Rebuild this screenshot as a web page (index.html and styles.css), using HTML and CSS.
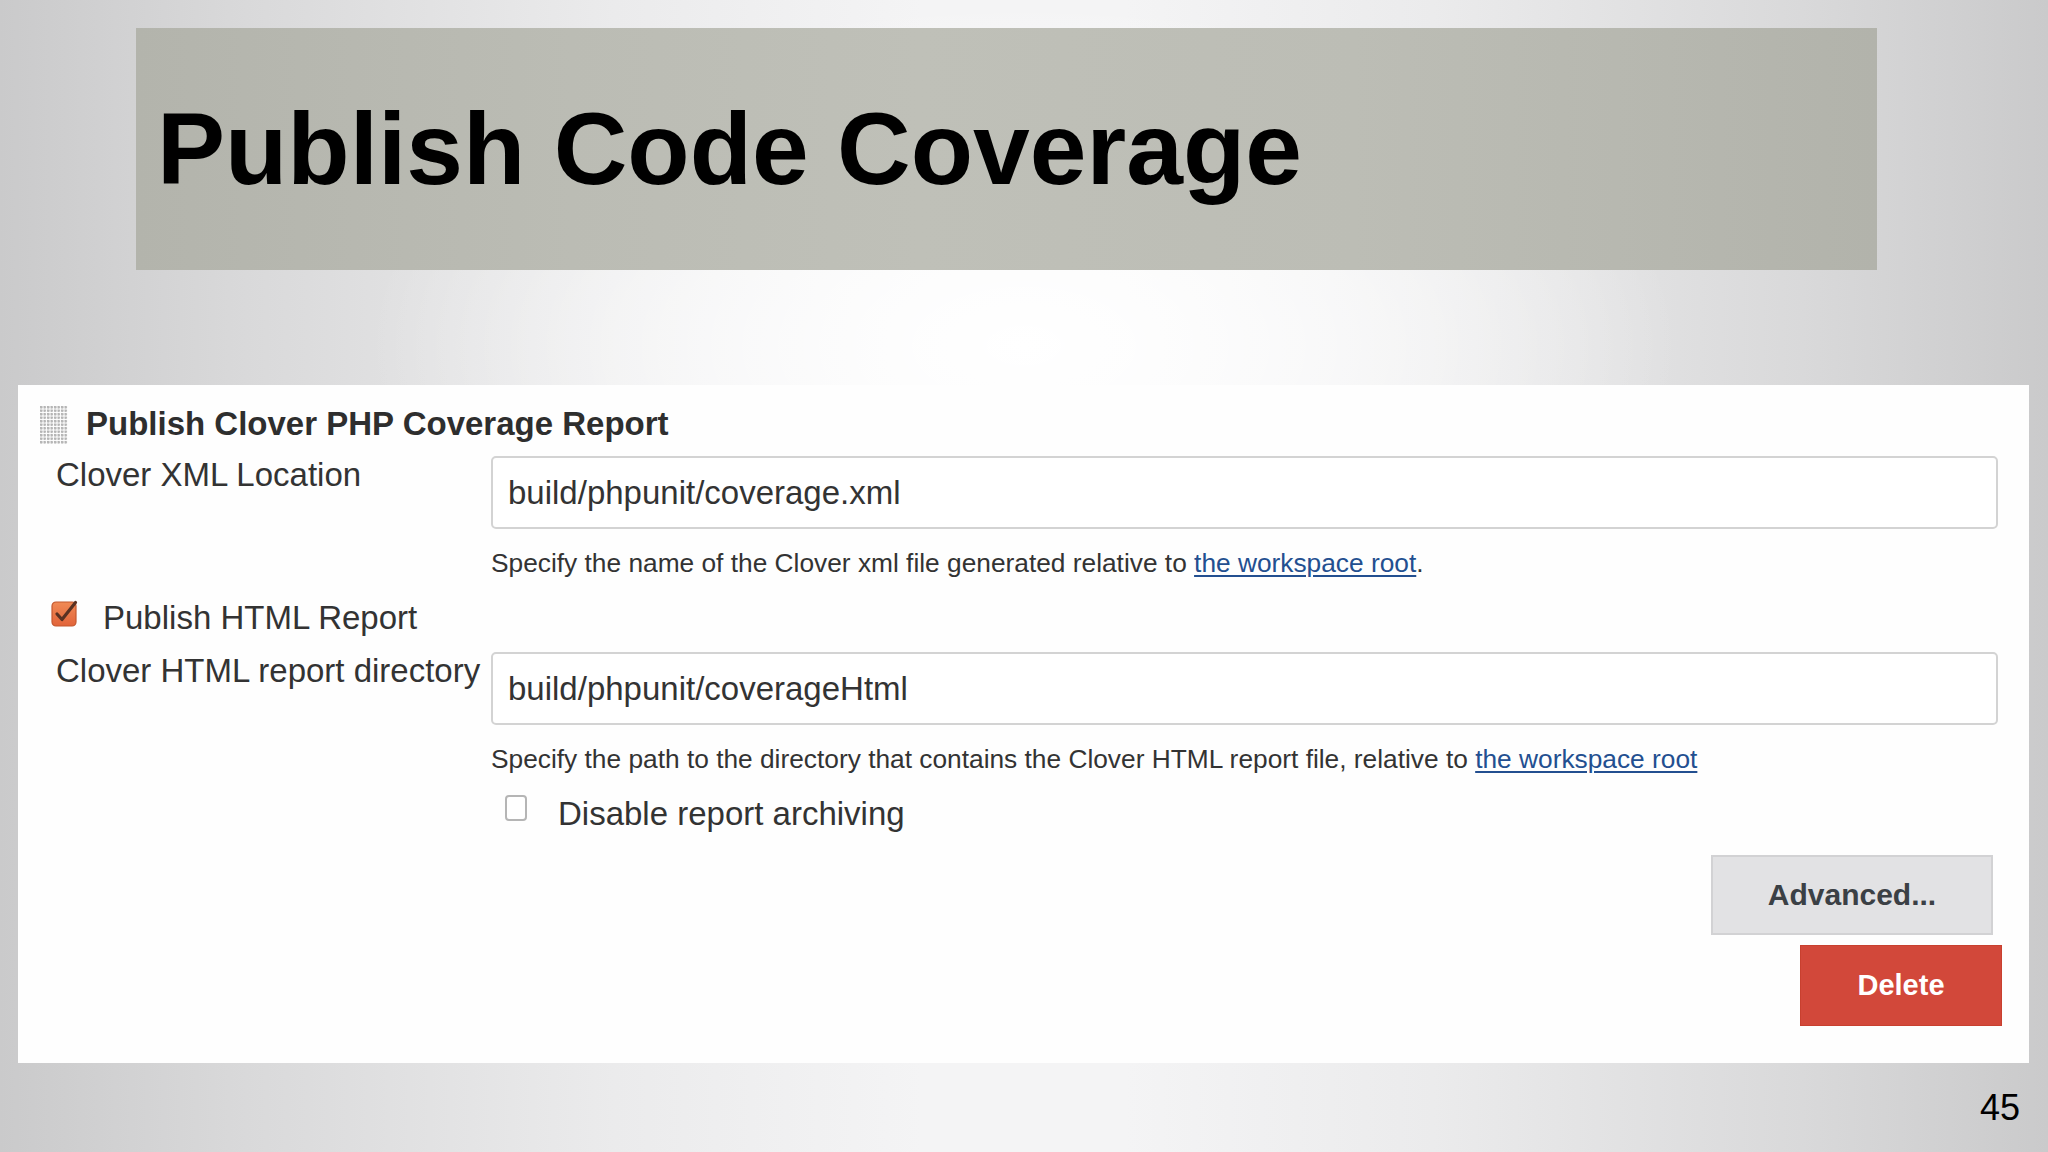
FILE: index.html
```html
<!DOCTYPE html>
<html lang="en">
<head>
<meta charset="utf-8">
<title>Publish Code Coverage</title>
<link rel="stylesheet" href="styles.css">
</head>
<body>
<div class="slide">
  <div class="banner"><h1 class="title">Publish Code Coverage</h1></div>

  <div class="panel">
    <div class="head">
      <span class="handle"></span>
      <h2 class="section-title">Publish Clover PHP Coverage Report</h2>
    </div>

    <div class="field field-first">
      <label class="lbl">Clover XML Location</label>
      <input class="text-input" type="text" value="build/phpunit/coverage.xml" readonly>
    </div>
    <p class="help">Specify the name of the Clover xml file generated relative to <a href="#">the workspace root</a>.</p>

    <div class="check check-html">
      <svg class="box" width="27" height="28" viewBox="0 0 27 28">
        <defs>
          <linearGradient id="og" x1="0" y1="0" x2="0" y2="1">
            <stop offset="0" stop-color="#f08a55"/>
            <stop offset="1" stop-color="#e2643a"/>
          </linearGradient>
        </defs>
        <rect x="1" y="3" width="24" height="24" rx="4" fill="url(#og)" stroke="#c4582f" stroke-width="1.2"/>
        <path d="M6 15 L11 20.5 L24.5 3.5" fill="none" stroke="#5a3122" stroke-width="3.2" stroke-linecap="round" stroke-linejoin="round"/>
      </svg>
      <span class="check-label">Publish HTML Report</span>
    </div>

    <div class="field field-second">
      <label class="lbl">Clover HTML report directory</label>
      <input class="text-input" type="text" value="build/phpunit/coverageHtml" readonly>
    </div>
    <p class="help">Specify the path to the directory that contains the Clover HTML report file, relative to <a href="#">the workspace root</a></p>

    <div class="check check-archive">
      <span class="box-empty"></span>
      <span class="check-label">Disable report archiving</span>
    </div>

    <div class="buttons">
      <button class="btn btn-adv" type="button">Advanced...</button>
      <button class="btn btn-del" type="button">Delete</button>
    </div>
  </div>

  <div class="pagenum">45</div>
</div>
</body>
</html>
```

FILE: styles.css
```css
* { box-sizing: border-box; }

html, body {
  margin: 0;
  padding: 0;
}

body {
  width: 2048px;
  height: 1152px;
  overflow: hidden;
  font-family: "Liberation Sans", Arial, Helvetica, sans-serif;
}

.slide {
  width: 2048px;
  height: 1152px;
  padding-top: 28px;
  background:
    radial-gradient(ellipse 32% 30% at 50% 30%, rgba(255,255,255,1) 0%, rgba(255,255,255,0.6) 50%, rgba(255,255,255,0) 100%),
    linear-gradient(90deg, #cacacb 0%, #d9d9da 12%, #ebebec 30%, #f4f4f5 45%, #f4f4f5 55%, #ebebec 70%, #d9d9da 88%, #cacacb 100%);
}

/* Title banner */
.banner {
  margin-left: 136px;
  width: 1741px;
  height: 242px;
  display: flex;
  align-items: center;
  padding-left: 21px;
  background: linear-gradient(90deg, #b3b4ac 0%, #bbbcb4 25%, #bfc0b8 45%, #bcbdb5 70%, #b2b3ab 100%);
}

.title {
  margin: 0;
  font-size: 102px;
  line-height: 102px;
  font-weight: 700;
  color: #000;
}

/* White form panel */
.panel {
  margin-top: 115px;
  margin-left: 18px;
  width: 2011px;
  height: 678px;
  background: #fefefe;
  color: #333;
}

.head {
  display: flex;
  align-items: flex-start;
  padding-top: 21px;
  padding-left: 22px;
}

.handle {
  width: 28px;
  height: 38px;
  background-image:
    radial-gradient(circle at 1.2px 1.2px, #b4b4b4 1.1px, transparent 1.6px);
  background-size: 3.5px 3.5px;
}

.section-title {
  margin: 2px 0 0 18px;
  font-size: 33px;
  line-height: 31px;
  font-weight: 700;
  color: #2e2e2e;
}

.field {
  display: grid;
  grid-template-columns: 451px 1507px;
  padding-left: 22px;
}

.field-first { margin-top: 12px; }
.field-second { margin-top: 15px; }

.lbl {
  padding-left: 16px;
  font-size: 33px;
  line-height: 38px;
  color: #333;
}

.text-input {
  display: block;
  width: 1507px;
  height: 73px;
  margin: 0;
  padding: 0 0 0 15px;
  border: 2px solid #d3d3d3;
  border-radius: 5px;
  background: #fff;
  font-family: "Liberation Sans", Arial, Helvetica, sans-serif;
  font-size: 33px;
  color: #333;
  outline: none;
}

.help {
  margin: 16px 0 0 473px;
  font-size: 26.3px;
  line-height: 36px;
  color: #333;
}

.help + .check { margin-top: 18px; }

.help a {
  color: #234f90;
  text-decoration: underline;
  text-decoration-thickness: 2px;
  text-underline-offset: 3px;
}

.field-second + .help { margin-top: 16px; }

.check {
  display: flex;
  align-items: flex-start;
  height: 38px;
}

.check-label {
  font-size: 33px;
  line-height: 38px;
  color: #333;
}

.check-html {
  padding-left: 33px;
}

.check-html .box {
  margin-top: 0;
  display: block;
}

.check-html .check-label {
  margin-left: 25px;
}

.check-archive {
  padding-left: 487px;
}

.box-empty {
  display: block;
  width: 22px;
  height: 26px;
  margin-top: 0;
  border: 2px solid #b5b5b5;
  border-radius: 4px;
  background: #fff;
}

.check-archive .check-label {
  margin-left: 31px;
}

.buttons {
  display: flex;
  flex-direction: column;
  align-items: flex-end;
  margin-top: 22px;
  padding-right: 27px;
}

.btn {
  margin: 0;
  font-family: "Liberation Sans", Arial, Helvetica, sans-serif;
  font-weight: 700;
  cursor: pointer;
}

.btn-adv {
  width: 282px;
  height: 80px;
  margin-right: 9px;
  border: 2px solid #d2d2d4;
  background: #e2e2e4;
  color: #3b4045;
  font-size: 30px;
}

.btn-del {
  width: 202px;
  height: 81px;
  margin-top: 10px;
  border: 1px solid #c8402f;
  background: #d2483a;
  color: #fff;
  font-size: 29px;
}

.pagenum {
  margin-top: 27px;
  padding-right: 28px;
  text-align: right;
  font-size: 36px;
  line-height: 36px;
  color: #000;
}
```
